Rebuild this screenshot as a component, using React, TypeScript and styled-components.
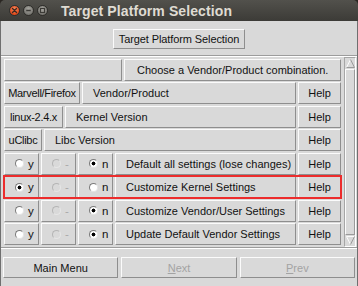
import React from 'react';
import styled, { createGlobalStyle, css } from 'styled-components';

const Global = createGlobalStyle`
  html, body { margin: 0; padding: 0; background: #2a2622; }
  body { width: 358px; height: 286px; overflow: hidden; font-family: "Liberation Sans", Arial, sans-serif; }
  * { box-sizing: border-box; }
`;

const Window = styled.div`
  width: 358px;
  height: 286px;
  display: flex;
  flex-direction: column;
  border-radius: 5px 5px 0 0;
  overflow: hidden;
`;

const TitleBar = styled.div`
  height: 21px;
  flex: none;
  display: flex;
  align-items: center;
  padding-left: 9px;
  background: linear-gradient(#52514c, #3c3b37);
`;

const WinButtons = styled.div`
  display: flex;
  gap: 3px;
`;

const WinButton = styled.span<{ $close?: boolean }>`
  width: 11px;
  height: 11px;
  border-radius: 50%;
  display: flex;
  align-items: center;
  justify-content: center;
  border: 1px solid #2e2d2a;
  background: ${p =>
    p.$close
      ? 'radial-gradient(circle at 50% 35%, #f58a5e, #e2491b 70%)'
      : 'radial-gradient(circle at 50% 35%, #a8a7a1, #74736e 75%)'};
`;

const Title = styled.div`
  margin-left: 13px;
  color: #dfdbd2;
  font-weight: bold;
  font-size: 14px;
  letter-spacing: 0.1px;
`;

const Body = styled.div`
  flex: 1;
  display: flex;
  flex-direction: column;
  background: #d9d9d9;
  border-left: 1px solid #6f6f6f;
  border-right: 1px solid #6f6f6f;
  color: #000;
  font-size: 11px;
`;

const TopFrame = styled.div`
  height: 34px;
  display: flex;
  justify-content: center;
  padding-top: 8px;
`;

const Separator = styled.div`
  height: 2px;
  flex: none;
  border-top: 1px solid #9c9c9c;
  border-bottom: 1px solid #ffffff;
`;

const ScrollArea = styled.div`
  height: 190px;
  display: flex;
`;

const Canvas = styled.div`
  width: 342px;
  padding: 2px 2px 0 3px;
  display: flex;
  flex-direction: column;
  gap: 1.45px;
`;

const Row = styled.div<{ $highlight?: boolean }>`
  height: 22px;
  display: flex;
  gap: 2px;
  ${p =>
    p.$highlight &&
    css`
      outline: 2px solid #ec2c2c;
      outline-offset: -1px;
    `}
`;

const TkButton = styled.div<{ $width?: number; $grow?: boolean; $align?: 'left' | 'center'; $pad?: number; $disabled?: boolean }>`
  height: 100%;
  display: flex;
  align-items: center;
  justify-content: ${p => (p.$align === 'left' ? 'flex-start' : 'center')};
  padding: 0 ${p => p.$pad ?? 4}px;
  ${p => (p.$width ? `width: ${p.$width}px; flex: none;` : '')}
  ${p => (p.$grow ? 'flex: 1; min-width: 0;' : '')}
  background: #d9d9d9;
  border: 1px solid;
  border-color: #fbfbfb #8e8e8e #8e8e8e #fbfbfb;
  color: ${p => (p.$disabled ? '#a3a3a3' : '#111')};
  white-space: nowrap;
`;

const ValueButton = styled(TkButton)`
  padding: 0;
  letter-spacing: -0.3px;
`;

const TopButton = styled(TkButton)`
  height: 20px;
  padding: 0 5px;
  letter-spacing: -0.1px;
`;

const RadioCell = styled(TkButton)`
  width: 35px;
  flex: none;
  justify-content: flex-start;
  padding: 0 0 0 10px;
  gap: 4px;
`;

const Indicator = styled.span<{ $on?: boolean; $disabled?: boolean }>`
  width: 9px;
  height: 9px;
  flex: none;
  border-radius: 50%;
  border: 1px solid;
  border-color: ${p => (p.$disabled ? '#b5b5b5 #e6e6e6 #e6e6e6 #b5b5b5' : '#7a7a7a #e4e4e4 #e4e4e4 #7a7a7a')};
  background: ${p =>
    p.$disabled ? '#d9d9d9' : p.$on ? 'radial-gradient(circle, #000 0 1.7px, #fff 2.2px)' : '#fff'};
`;

const RadioLabel = styled.span<{ $disabled?: boolean }>`
  color: ${p => (p.$disabled ? '#a8a8a8' : '#111')};
  font-size: 11.5px;
`;

const Scrollbar = styled.div`
  width: 12px;
  margin: 0 1px;
  display: flex;
  flex-direction: column;
  border: 1px solid;
  border-color: #a6a6a6 #ffffff #ffffff #a6a6a6;
`;

const Arrow = styled.div`
  height: 11px;
  flex: none;
  display: flex;
  align-items: center;
  justify-content: center;
`;

const Slider = styled.div`
  flex: 1;
  border: 1px solid;
  border-color: #fbfbfb #9a9a9a #9a9a9a #fbfbfb;
`;

const BottomBar = styled.div`
  flex: 1;
  display: grid;
  grid-template-columns: repeat(3, 1fr);
  gap: 3px;
  padding: 8px 2px 0 2px;
  align-content: start;
`;

const BottomButton = styled(TkButton)`
  height: 21px;
`;

const ArrowIcon = ({ down }: { down?: boolean }) => (
  <svg width="9" height="9" viewBox="0 0 9 9">
    {down ? (
      <>
        <path d="M0.5 0.5 L8.5 0.5 L4.5 8.5 Z" fill="#d9d9d9" />
        <path d="M0.5 0.5 L8.5 0.5" stroke="#fbfbfb" />
        <path d="M0.5 0.5 L4.5 8.5" stroke="#fbfbfb" />
        <path d="M8.5 0.5 L4.5 8.5" stroke="#9a9a9a" />
      </>
    ) : (
      <>
        <path d="M4.5 0.5 L8.5 8.5 L0.5 8.5 Z" fill="#d9d9d9" />
        <path d="M4.5 0.5 L0.5 8.5" stroke="#fbfbfb" />
        <path d="M4.5 0.5 L8.5 8.5" stroke="#9a9a9a" />
        <path d="M0.5 8.5 L8.5 8.5" stroke="#9a9a9a" />
      </>
    )}
  </svg>
);

const CloseGlyph = () => (
  <svg width="7" height="7" viewBox="0 0 7 7">
    <path d="M1.5 1.5 L5.5 5.5 M5.5 1.5 L1.5 5.5" stroke="#3b2a22" strokeWidth="1.3" strokeLinecap="round" />
  </svg>
);
const MinGlyph = () => (
  <svg width="7" height="7" viewBox="0 0 7 7">
    <path d="M1.2 3.5 L5.8 3.5" stroke="#3c3b37" strokeWidth="1.4" />
  </svg>
);
const MaxGlyph = () => (
  <svg width="7" height="7" viewBox="0 0 7 7">
    <rect x="1.5" y="1.5" width="4" height="4" fill="none" stroke="#3c3b37" strokeWidth="1.1" />
  </svg>
);

const infoRows = [
  { value: 'Marvell/Firefox', width: 76, label: 'Vendor/Product' },
  { value: 'linux-2.4.x', width: 59, label: 'Kernel Version' },
  { value: 'uClibc', width: 38, label: 'Libc Version' },
];

const choiceRows = [
  { sel: 'n', label: 'Default all settings (lose changes)' },
  { sel: 'y', label: 'Customize Kernel Settings', highlight: true },
  { sel: 'n', label: 'Customize Vendor/User Settings' },
  { sel: 'n', label: 'Update Default Vendor Settings' },
];

export default function App() {
  return (
    <>
      <Global />
      <Window>
        <TitleBar>
          <WinButtons>
            <WinButton $close>
              <CloseGlyph />
            </WinButton>
            <WinButton>
              <MinGlyph />
            </WinButton>
            <WinButton>
              <MaxGlyph />
            </WinButton>
          </WinButtons>
          <Title>Target Platform Selection</Title>
        </TitleBar>
        <Body>
          <TopFrame>
            <TopButton>Target Platform Selection</TopButton>
          </TopFrame>
          <Separator />
          <ScrollArea>
            <Canvas>
              <Row>
                <TkButton $width={118} />
                <TkButton $grow $align="left" $pad={12}>
                  Choose a Vendor/Product combination.
                </TkButton>
              </Row>
              {infoRows.map(r => (
                <Row key={r.label}>
                  <ValueButton $width={r.width}>{r.value}</ValueButton>
                  <TkButton $grow $align="left" $pad={10}>
                    {r.label}
                  </TkButton>
                  <TkButton $width={43}>Help</TkButton>
                </Row>
              ))}
              {choiceRows.map(r => (
                <Row key={r.label} $highlight={r.highlight}>
                  <RadioCell>
                    <Indicator $on={r.sel === 'y'} />
                    <RadioLabel>y</RadioLabel>
                  </RadioCell>
                  <RadioCell>
                    <Indicator $disabled />
                    <RadioLabel $disabled>-</RadioLabel>
                  </RadioCell>
                  <RadioCell>
                    <Indicator $on={r.sel === 'n'} />
                    <RadioLabel>n</RadioLabel>
                  </RadioCell>
                  <TkButton $grow $align="left" $pad={10}>
                    {r.label}
                  </TkButton>
                  <TkButton $width={43}>Help</TkButton>
                </Row>
              ))}
            </Canvas>
            <Scrollbar>
              <Arrow>
                <ArrowIcon />
              </Arrow>
              <Slider />
              <Arrow>
                <ArrowIcon down />
              </Arrow>
            </Scrollbar>
          </ScrollArea>
          <Separator />
          <BottomBar>
            <BottomButton>Main Menu</BottomButton>
            <BottomButton $disabled>
              <u>N</u>ext
            </BottomButton>
            <BottomButton $disabled>
              <u>P</u>rev
            </BottomButton>
          </BottomBar>
        </Body>
      </Window>
    </>
  );
}
